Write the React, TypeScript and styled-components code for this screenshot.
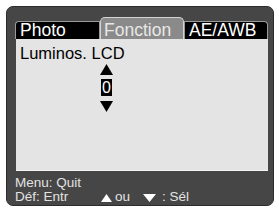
import React from "react";
import styled, { createGlobalStyle } from "styled-components";

const GlobalStyle = createGlobalStyle`
  html, body {
    margin: 0;
    padding: 0;
    background: #ffffff;
  }
  body {
    font-family: "Liberation Sans", Arial, Helvetica, sans-serif;
  }
`;

const Screen = styled.div`
  width: 279px;
  height: 209px;
  padding: 6px 0 0 6px;
  box-sizing: border-box;
`;

const Frame = styled.div`
  width: 268px;
  height: 200px;
  box-sizing: border-box;
  background: #464646;
  border: 1px solid #2c2c2c;
  border-radius: 7px;
  padding: 10px 0 0 9px;
  display: flex;
  flex-direction: column;
`;

const TabRow = styled.div`
  display: flex;
  align-items: flex-end;
  height: 22px;
  margin-left: -1px;
`;

const Tab = styled.div<{ $active?: boolean; $w: number; $side?: "left" | "right" }>`
  box-sizing: border-box;
  width: ${(p) => p.$w}px;
  height: ${(p) => (p.$active ? 22 : 18)}px;
  background: ${(p) => (p.$active ? "#8a8a8a" : "#000000")};
  color: ${(p) => (p.$active ? "#e8e8e8" : "#ffffff")};
  border: 1px solid ${(p) => (p.$active ? "#d4d4d4" : "#9a9a9a")};
  border-bottom: none;
  border-radius: ${(p) =>
    p.$active ? "5px 5px 0 0" : p.$side === "left" ? "4px 0 0 0" : p.$side === "right" ? "0 4px 0 0" : "0"};
  font-size: 17.5px;
  line-height: 17px;
  padding: ${(p) => (p.$active ? "4px 0 0 3px" : "0 0 0 4px")};
  white-space: nowrap;
`;

const Panel = styled.div`
  width: 252px;
  height: 132px;
  box-sizing: border-box;
  background: #e4e4e4;
  border-bottom: 1px solid #f4f4f4;
  padding: 5px 0 0 4px;
  display: flex;
  flex-direction: column;
`;

const Label = styled.div`
  font-size: 16.5px;
  line-height: 18px;
  color: #000000;
  white-space: nowrap;
`;

const Spinner = styled.div`
  margin: 2px 0 0 80px;
  width: 13px;
  display: flex;
  flex-direction: column;
  align-items: center;
`;

const Arrow = styled.svg`
  display: block;
  width: 13px;
  height: 11px;
`;

const Digit = styled.div`
  width: 11px;
  height: 17px;
  margin: 4px 0 5px;
  background: #000000;
  color: #ffffff;
  font-size: 16px;
  line-height: 17px;
  text-align: center;
`;

const Footer = styled.div`
  margin: 5px 0 0 -1px;
  color: #e2e2e2;
  font-size: 13.5px;
  line-height: 14px;
`;

const FootRow = styled.div`
  display: flex;
  align-items: center;
  white-space: nowrap;
`;

const FootKey = styled.span`
  width: 86px;
`;

const MiniArrow = styled.svg<{ $w: number }>`
  display: block;
  width: ${(p) => p.$w}px;
  height: 8px;
  margin-top: 2px;
`;

const Word = styled.span<{ $left: number; $right: number }>`
  padding: 0 ${(p) => p.$right}px 0 ${(p) => p.$left}px;
`;

const Up = () => (
  <Arrow viewBox="0 0 13 11">
    <polygon points="6.5,0 13,11 0,11" fill="#000" />
  </Arrow>
);

const Down = () => (
  <Arrow viewBox="0 0 13 11">
    <polygon points="0,0 13,0 6.5,11" fill="#000" />
  </Arrow>
);

export default function App() {
  return (
    <>
      <GlobalStyle />
      <Screen>
        <Frame>
          <TabRow>
            <Tab $w={85} $side="left">Photo</Tab>
            <Tab $w={84} $active>Fonction</Tab>
            <Tab $w={84} $side="right">AE/AWB</Tab>
          </TabRow>
          <Panel>
            <Label>Luminos. LCD</Label>
            <Spinner>
              <Up />
              <Digit>0</Digit>
              <Down />
            </Spinner>
          </Panel>
          <Footer>
            <FootRow>Menu: Quit</FootRow>
            <FootRow>
              <FootKey>Déf: Entr</FootKey>
              <MiniArrow $w={11} viewBox="0 0 11 8">
                <polygon points="5.5,0 11,8 0,8" fill="#fff" />
              </MiniArrow>
              <Word $left={3} $right={13}>ou</Word>
              <MiniArrow $w={13} viewBox="0 0 13 8">
                <polygon points="0,0 13,0 6.5,8" fill="#fff" />
              </MiniArrow>
              <Word $left={6} $right={0}>: Sél</Word>
            </FootRow>
          </Footer>
        </Frame>
      </Screen>
    </>
  );
}
